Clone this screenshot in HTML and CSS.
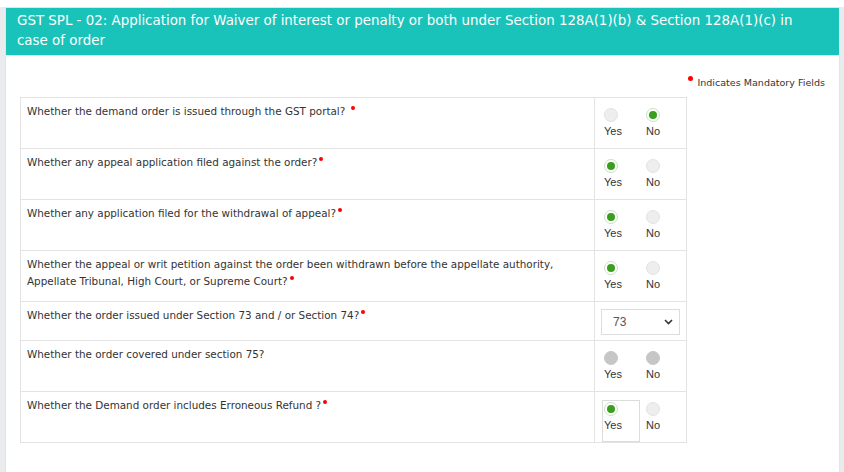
FILE: index.html
```html
<!DOCTYPE html>
<html>
<head>
<meta charset="utf-8">
<link rel="stylesheet" href="styles.css">
</head>
<body>
<div class="page">
  <div class="panel">
    <div class="panel-head">GST SPL - 02: Application for Waiver of interest or penalty or both under Section 128A(1)(b) &amp; Section 128A(1)(c) in case of order</div>
    <div class="panel-body">
      <div class="mandatory"><span class="dot"></span>Indicates Mandatory Fields</div>
      <div class="qtable">
        <div class="row">
          <div class="q">Whether the demand order is issued through the GST portal? <span class="req"></span></div>
          <div class="a">
            <label class="opt"><span class="radio"></span>Yes</label>
            <label class="opt"><span class="radio on"></span>No</label>
          </div>
        </div>
        <div class="row">
          <div class="q">Whether any appeal application filed against the order?<span class="req"></span></div>
          <div class="a">
            <label class="opt"><span class="radio on"></span>Yes</label>
            <label class="opt"><span class="radio"></span>No</label>
          </div>
        </div>
        <div class="row">
          <div class="q">Whether any application filed for the withdrawal of appeal?<span class="req"></span></div>
          <div class="a">
            <label class="opt"><span class="radio on"></span>Yes</label>
            <label class="opt"><span class="radio"></span>No</label>
          </div>
        </div>
        <div class="row">
          <div class="q">Whether the appeal or writ petition against the order been withdrawn before the appellate authority, Appellate Tribunal, High Court, or Supreme Court?<span class="req"></span></div>
          <div class="a">
            <label class="opt"><span class="radio on"></span>Yes</label>
            <label class="opt"><span class="radio"></span>No</label>
          </div>
        </div>
        <div class="row short">
          <div class="q">Whether the order issued under Section 73 and / or Section 74?<span class="req"></span></div>
          <div class="a">
            <div class="select"><span>73</span>
              <svg class="chev" width="9" height="6" viewBox="0 0 9 6"><path d="M1 1 L4.5 4.5 L8 1" fill="none" stroke="#333" stroke-width="1.6"/></svg>
            </div>
          </div>
        </div>
        <div class="row">
          <div class="q">Whether the order covered under section 75?</div>
          <div class="a">
            <label class="opt"><span class="radio dis"></span>Yes</label>
            <label class="opt"><span class="radio dis"></span>No</label>
          </div>
        </div>
        <div class="row">
          <div class="q">Whether the Demand order includes Erroneous Refund ?<span class="req"></span></div>
          <div class="a">
            <label class="opt focus"><span class="radio on"></span>Yes</label>
            <label class="opt"><span class="radio"></span>No</label>
          </div>
        </div>
      </div>
    </div>
  </div>
</div>
</body>
</html>
```
FILE: styles.css
```css
html, body {
  margin: 0;
  padding: 0;
  background: #ffffff;
  height: 472px;
  overflow: hidden;
}
.page {
  margin-top: 7px;
  height: 480px;
  background: #e9ebee;
  padding: 0 4px 0 5px;
}
.panel {
  background: #ffffff;
  border: 1px solid #e1e4e8;
  height: 100%;
  box-sizing: border-box;
}
.panel-head {
  background: #1ac3b9;
  color: #ffffff;
  font-family: "DejaVu Sans", Verdana, sans-serif;
  font-size: 13.4px;
  line-height: 20px;
  padding: 3px 24px 4px 11px;
  border-bottom: 1px solid #e6ecec;
}
.panel-body {
  padding: 20px 14px 0 14px;
}
.mandatory {
  display: flex;
  justify-content: flex-end;
  font-family: "DejaVu Sans", Verdana, sans-serif;
  font-size: 9.55px;
  color: #333333;
  line-height: 14px;
  margin-bottom: 7px;
}
.dot {
  width: 5px;
  height: 5px;
  border-radius: 50%;
  background: #ff0000;
  margin-right: 4px;
}
.qtable {
  width: 665px;
  border: 1px solid #e3e3e3;
}
.row {
  display: grid;
  grid-template-columns: 574px 1fr;
  min-height: 50px;
  border-top: 1px solid #e3e3e3;
}
.row:first-child {
  border-top: none;
}
.row.short {
  min-height: 38px;
}
.q {
  font-family: "DejaVu Sans", Verdana, sans-serif;
  font-size: 10.4px;
  line-height: 17px;
  color: #333333;
  padding: 5px 20px 0 6px;
  border-right: 1px solid #e3e3e3;
}
.req {
  display: inline-block;
  width: 4px;
  height: 4px;
  border-radius: 50%;
  background: #ff0000;
  vertical-align: 5px;
  margin-left: 2px;
}
.a {
  display: flex;
  gap: 4px;
  padding: 8px 0 0 7px;
}
.opt {
  display: flex;
  flex-direction: column;
  align-items: flex-start;
  width: 38px;
  font-family: "Liberation Sans", Arial, sans-serif;
  font-size: 11px;
  color: #333333;
  line-height: 13px;
  box-sizing: border-box;
  border: 1px solid transparent;
  padding: 1px 0 1px 1px;
}
.opt.focus {
  border-color: #dcdcdc;
}
.radio {
  width: 14px;
  height: 14px;
  box-sizing: border-box;
  border-radius: 50%;
  background: #eeeeee;
  border: 1px solid #e2e2e2;
  margin-bottom: 3px;
  display: flex;
  align-items: center;
  justify-content: center;
}
.radio.on {
  background: #ffffff;
  border: 1px solid #c9dfc3;
}
.radio.on::after {
  content: "";
  width: 8px;
  height: 8px;
  border-radius: 50%;
  background: #3c9e1e;
}
.radio.dis {
  background: #c6c6c6;
  border-color: #c6c6c6;
}
.select {
  display: flex;
  align-items: center;
  justify-content: space-between;
  width: 79px;
  height: 26px;
  box-sizing: border-box;
  border: 1px solid #dcdcdc;
  padding: 0 6px 0 11px;
  font-family: "Liberation Sans", Arial, sans-serif;
  font-size: 12px;
  color: #555555;
  margin-top: -1px;
  margin-left: -1px;
}
```
